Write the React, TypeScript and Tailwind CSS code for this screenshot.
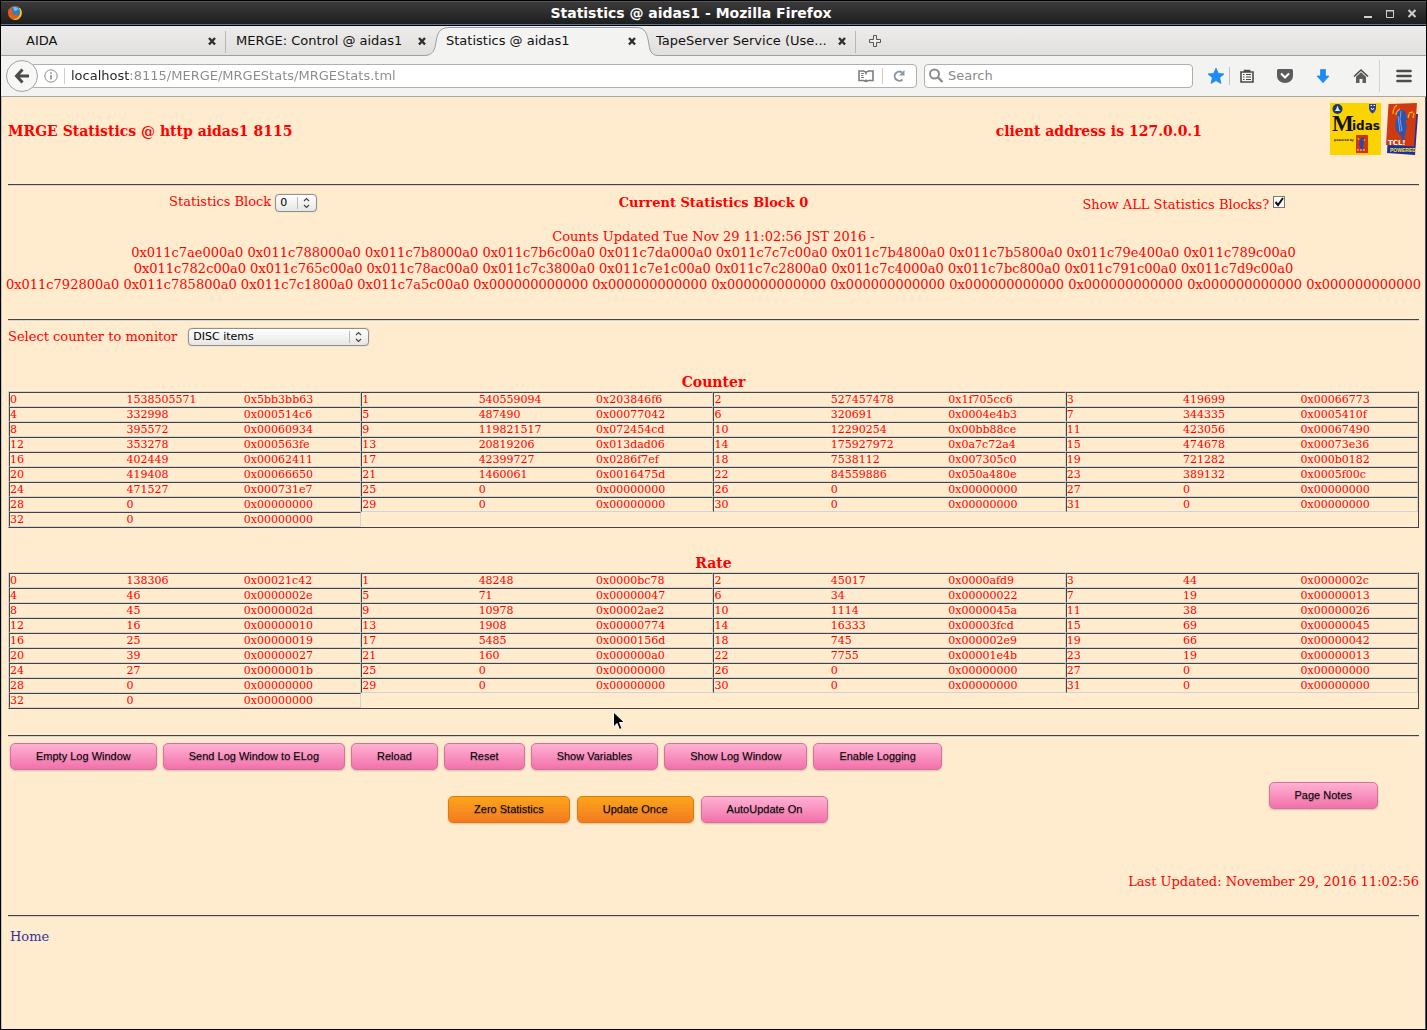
import { useState, type ReactNode } from "react";

const TABS = [
  { title: "AIDA", active: false },
  { title: "MERGE: Control @ aidas1", active: false },
  { title: "Statistics @ aidas1", active: true },
  { title: "TapeServer Service (Use...", active: false },
];

const TIMESTAMPS = [
  "0x011c7ae000a0 0x011c788000a0 0x011c7b8000a0 0x011c7b6c00a0 0x011c7da000a0 0x011c7c7c00a0 0x011c7b4800a0 0x011c7b5800a0 0x011c79e400a0 0x011c789c00a0",
  "0x011c782c00a0 0x011c765c00a0 0x011c78ac00a0 0x011c7c3800a0 0x011c7e1c00a0 0x011c7c2800a0 0x011c7c4000a0 0x011c7bc800a0 0x011c791c00a0 0x011c7d9c00a0",
  "0x011c792800a0 0x011c785800a0 0x011c7c1800a0 0x011c7a5c00a0 0x000000000000 0x000000000000 0x000000000000 0x000000000000 0x000000000000 0x000000000000 0x000000000000 0x000000000000",
];

const COUNTERS = [
  1538505571, 540559094, 527457478, 419699, 332998, 487490, 320691, 344335,
  395572, 119821517, 12290254, 423056, 353278, 20819206, 175927972, 474678,
  402449, 42399727, 7538112, 721282, 419408, 1460061, 84559886, 389132,
  471527, 0, 0, 0, 0, 0, 0, 0, 0,
];

const RATES = [
  138306, 48248, 45017, 44, 46, 71, 34, 19,
  45, 10978, 1114, 38, 16, 1908, 16333, 69,
  25, 5485, 745, 66, 39, 160, 7755, 19,
  27, 0, 0, 0, 0, 0, 0, 0, 0,
];

const LOG_BUTTONS = [
  "Empty Log Window",
  "Send Log Window to ELog",
  "Reload",
  "Reset",
  "Show Variables",
  "Show Log Window",
  "Enable Logging",
];

const toHex = (n: number) => "0x" + n.toString(16).padStart(8, "0");

function TitleBar() {
  return (
    <div className="flex h-[26px] items-center border-y border-black bg-linear-to-b from-[#3c3c3c] via-[#2d2d2d] to-[#1c1c1c] pl-[6px] pr-[5px] shadow-[inset_0_-1px_0_#5477a0,inset_0_1px_0_#555]">
      <svg className="h-4 w-4" viewBox="0 0 16 16">
        <circle cx="8" cy="8" r="7" fill="#e0661a" />
        <circle cx="8.5" cy="6.5" r="5" fill="#2b7fc4" />
        <path d="M6 2.500c2-1 5 0 6 2-2 0-2 1-3 1.500s-2-.5-3-3.500z" fill="#6cc0ea" />
        <path d="M1.500 4c0 0 .5 1 1.500 1 1.500-.5 3 .5 3.500 1.500-1 0-1.500 1-1 2 1 1.500 3.500 1.500 5 .5-1 3-5 3.500-7 1.500C1.500 9 1 6 1.500 4z" fill="#e8591c" />
        <path d="M13 3c2.500 3 2.500 8-1.500 11-2 1.200-4 1.300-6 .5 4 0 7.500-2.500 7.500-7 0-1.500-.2-3-1-4.500z" fill="#f9c22e" />
      </svg>
      <h1 className="flex-1 text-center text-sm leading-5 font-bold text-white">
        Statistics @ aidas1 - Mozilla Firefox
      </h1>
      <div className="flex gap-1 text-[#d0d0cc]">
        <button type="button" aria-label="Minimize" className="h-4 w-[18px]">
          <svg className="mx-auto h-4 w-4" viewBox="0 0 16 16" fill="none" stroke="currentColor">
            <path d="M4 12h8" strokeWidth="2" />
          </svg>
        </button>
        <button type="button" aria-label="Maximize" className="h-4 w-[18px]">
          <svg className="mx-auto h-4 w-4" viewBox="0 0 16 16" fill="none" stroke="currentColor">
            <path d="M4.500 5v7.500h7V5M4 5.500h8M4 6h8" />
          </svg>
        </button>
        <button type="button" aria-label="Close" className="h-4 w-[18px]">
          <svg className="mx-auto h-4 w-4" viewBox="0 0 16 16" fill="none" stroke="currentColor">
            <path d="M4.500 5l7 7M11.500 5l-7 7" strokeWidth="2" />
          </svg>
        </button>
      </div>
    </div>
  );
}

function TabStrip() {
  return (
    <div className="flex h-[30px] items-center border-b border-[#a0a0a0] bg-linear-to-b from-[#edecea] to-[#e1e0de] pl-[15px] text-[13px] text-[#111]">
      {TABS.map((tab, i) => (
        <div key={tab.title} className="relative flex h-full w-[210px] items-center pt-px pl-[10px] pr-2">
          {tab.active && (
            <svg
              className="absolute top-px -left-3 h-[29px] w-[235px]"
              viewBox="0 0 235 29"
              preserveAspectRatio="none"
            >
              <path
                d="M0 28.500C6 28.500 10 26 11.500 18C13 7 15 .5 25 .5H213C221 .5 223.500 7 225 18C226 26 229 28.500 235 28.500V30H0z"
                fill="#f3f3f2"
              />
              <path
                d="M0 28.500C6 28.500 10 26 11.500 18C13 7 15 .5 25 .5H213C221 .5 223.500 7 225 18C226 26 229 28.500 235 28.500"
                fill="none"
                stroke="#9a9fa6"
              />
            </svg>
          )}
          <span className="relative flex-1 truncate">{tab.title}</span>
          <button type="button" aria-label={`Close ${tab.title}`} className="relative h-3 w-3">
            <svg className="h-3 w-3" viewBox="0 0 12 12" fill="none" stroke="#2e2e2e">
              <path d="M3 3l6 6.500M9 3L3 9.500" strokeWidth="2.400" />
            </svg>
          </button>
          {(i === 0 || i === 3) && (
            <span className="absolute right-0 top-[5px] h-[22px] w-px bg-[#b8b8b6]" />
          )}
        </div>
      ))}
      <button type="button" aria-label="Open a new tab" className="ml-3 pt-px">
        <svg className="h-[14px] w-[14px]" viewBox="0 0 14 14" fill="#ececec" stroke="#555">
          <path d="M5.500 1.500h3v4h4v3h-4v4h-3v-4h-4v-3h4z" />
        </svg>
      </button>
    </div>
  );
}

function ToolButton({ label, children }: { label: string; children: ReactNode }) {
  return (
    <button type="button" aria-label={label} className="flex h-6 w-[38px] items-center justify-center">
      {children}
    </button>
  );
}

function NavBar() {
  return (
    <div className="flex h-[41px] items-center border-b border-[#a8a8a8] bg-[#f3f3f2] pl-[5px] text-[13px]">
      <button
        type="button"
        aria-label="Back"
        className="relative z-10 flex h-8 w-8 items-center justify-center rounded-full border border-[#a3a3a3] bg-[#f7f7f6]"
      >
        <svg className="h-4 w-4" viewBox="0 0 16 16" fill="none" stroke="#4b4b4b" strokeWidth="3">
          <path d="M8.500 1.500L2.500 8l6 6.500M2.500 8H15" />
        </svg>
      </button>
      <div className="-ml-2 flex h-6 flex-1 items-center rounded-sm border border-[#b0b0b0] bg-white pl-[13px]">
        <svg className="h-[14px] w-[14px]" viewBox="0 0 14 14" fill="none" stroke="#8c8c8c">
          <circle cx="7" cy="7" r="6.200" />
          <path d="M7 6v4.500M7 3.300v1.500" strokeWidth="1.600" />
        </svg>
        <span className="mx-[6px] h-4 w-px bg-[#ccc]" />
        <input
          type="text"
          aria-label="Address"
          defaultValue="localhost:8115/MERGE/MRGEStats/MRGEStats.tml"
          className="min-w-0 flex-1 bg-[linear-gradient(90deg,#222_59px,#8a8a8a_59px)] bg-clip-text text-transparent outline-none"
        />
        <button type="button" aria-label="Reader view">
          <svg className="h-4 w-4" viewBox="0 0 16 16" fill="none" stroke="#7c7c7c" strokeWidth="1.600">
            <path d="M1 3h4.500L8 4.200 10.500 3H15v9.500h-4.500L8 13.500 5.500 12.500H1zM8 4.500v2M8 11.500v2" />
            <path d="M3 5.500h3M3 7.500h2.500M3 9.500h3" strokeWidth="1" />
          </svg>
        </button>
        <span className="mx-2 h-4 w-px bg-[#ccc]" />
        <button type="button" aria-label="Reload page" className="mr-[9px]">
          <svg className="h-4 w-4" viewBox="0 0 16 16" fill="none" stroke="#8796a5" strokeWidth="2">
            <path d="M11.500 11.500A4.600 4.600 0 1 1 11 4.500" />
            <path d="M13.500 2v5.500H8z" fill="#8796a5" stroke="none" />
          </svg>
        </button>
      </div>
      <div className="ml-[7px] flex h-6 w-[269px] items-center rounded-sm border border-[#b0b0b0] bg-white pl-[3px]">
        <svg className="h-4 w-4" viewBox="0 0 16 16" fill="none" stroke="#8c8c8c" strokeWidth="2">
          <circle cx="6.500" cy="6" r="4.500" />
          <path d="M10 9.500l4.500 4.500" strokeWidth="2.400" />
        </svg>
        <input
          type="text"
          aria-label="Search"
          placeholder="Search"
          className="ml-1 min-w-0 flex-1 outline-none placeholder:text-[#8a8a8a]"
        />
      </div>
      <button type="button" aria-label="Bookmark" className="ml-[14px] flex w-[18px] justify-center">
        <svg className="h-[18px] w-[18px]" viewBox="0 0 18 18">
          <path d="M9 1l2.300 5.300 5.700.6-4.300 3.800 1.300 5.800L9 13.600l-5 2.900 1.300-5.800L1 6.900l5.700-.6z" fill="#1a8cff" stroke="#1077dd" strokeWidth=".6" />
        </svg>
      </button>
      <span className="ml-1 h-[18px] w-px bg-[#c2c2c2]" />
      <div className="-ml-[2px] flex items-center">
        <ToolButton label="Bookmarks menu">
          <svg className="h-4 w-4" viewBox="0 0 16 16" fill="none" stroke="#4b4b4b" strokeWidth="1.600">
            <path d="M2 4h12v10H2zM5.500 3.500V2.500h5v1" />
            <path d="M4 6.500h1.500M7 6.500h5M4 9h1.500M7 9h5M4 11.500h1.500M7 11.500h5" strokeWidth="1.200" />
          </svg>
        </ToolButton>
        <ToolButton label="Pocket">
          <svg className="h-4 w-4" viewBox="0 0 16 16">
            <path d="M1.500 1h13q1.500 0 1.500 1.500V8a8 7 0 0 1-16 0V2.500Q0 1 1.500 1z" fill="#5c5c5c" />
            <path d="M4 5.500l4 4 4-4" fill="none" stroke="#fff" strokeWidth="2" />
          </svg>
        </ToolButton>
        <ToolButton label="Downloads">
          <svg className="h-4 w-4" viewBox="0 0 16 16">
            <path d="M5.500 1.500h5V8h3.500L8 14.800 2 8h3.500z" fill="#1a8cff" stroke="#0f78dc" strokeWidth=".6" />
          </svg>
        </ToolButton>
        <ToolButton label="Home page">
          <svg className="h-4 w-4" viewBox="0 0 16 16">
            <path d="M1 8.500L8 2l7 6.500" fill="none" stroke="#4b4b4b" strokeWidth="1.600" />
            <path d="M3 8.800L8 4.300l5 4.500V15H9.500v-4h-3v4H3z" fill="#5c5c5c" />
          </svg>
        </ToolButton>
      </div>
      <span className="-ml-px h-8 w-px bg-[#d4d4d4]" />
      <button type="button" aria-label="Open menu" className="ml-4 mr-[14px]">
        <svg className="h-4 w-4" viewBox="0 0 16 16" stroke="#4b4b4b" strokeWidth="2.600" strokeLinecap="round">
          <path d="M1.500 3h13M1.500 8h13M1.500 13h13" />
        </svg>
      </button>
    </div>
  );
}

function MidasLogo() {
  return (
    <svg className="h-[52px] w-[51px]" viewBox="0 0 51 52">
      <rect width="51" height="52" fill="#fbd300" />
      <circle cx="7.500" cy="6" r="5" fill="#173a66" />
      <path d="M4.500 8h6L9 6.500 7.500 2.500 6 6.500z" fill="#dfe8ef" />
      <path d="M39 1h7v5q-1 3-3.500 4.500Q40 9 39 6z" fill="#2b4390" />
      <path d="M40.500 2.500h1.500M43.500 2.500H45M41 5l1.500 2L44 5" stroke="#fff" fill="none" />
      <text x="2" y="28" fill="#111" className="font-['Liberation_Serif'] text-[23px] font-bold">M</text>
      <text x="22" y="27" fill="#111" className="font-['DejaVu_Sans'] text-[12px] font-bold">idas</text>
      <text x="4" y="38" fill="#222" className="font-['DejaVu_Sans'] text-[3px] font-bold">powered by</text>
      <rect x="26" y="32" width="12" height="18" fill="#cf3513" />
      <path d="M32 34l2 1-1 11-2 1-2-6 1-4z" fill="#2a49a0" />
      <path d="M28 35l1 2M35 36l-1 2" stroke="#f6bd1c" />
      <path d="M27 47h9" stroke="#f4d9c2" strokeDasharray="2 1" />
    </svg>
  );
}

function TclLogo() {
  return (
    <svg className="h-[52px] w-[33px]" viewBox="0 0 33 52">
      <path d="M26 11h6l-3 41-28-2 2-37z" fill="#1c2f93" />
      <path d="M2.500 1L31 0l-3 43.500L0 42z" fill="#d03a10" />
      <path d="M13 7c4-1 7 1 7 5l2 4-3 2 2 5-2 8-1 10-3-8-5-6c-1-5-1-9 1-12 0-4 0-6 2-8z" fill="#2c55b0" />
      <path d="M15 8l-1 8 2 12M12 13l2 16" fill="none" stroke="#7d9fe0" />
      <path d="M7 11c0-4 1-7 4-9M10 12c0-3 1-4 4-6M27 9l-4 1M28 10l-1 5M23 11l-1 4" fill="none" stroke="#f8a818" strokeWidth="1.400" />
      <text x="2" y="42" fill="#fff" className="font-['DejaVu_Sans'] text-[7px]">TCL!</text>
      <text x="4" y="49" fill="#ffe640" className="font-['Liberation_Sans'] text-[5px] font-bold">POWERED</text>
    </svg>
  );
}

function Rule({ className }: { className: string }) {
  return <hr className={`h-[2px] border-t border-b border-t-[#444] border-b-[#d3d3d3] ${className}`} />;
}

function Picker({ id, options, width }: { id: string; options: string[]; width: string }) {
  return (
    <span className={`relative inline-flex ${width}`}>
      <select
        id={id}
        className="h-[18px] w-full appearance-none rounded border border-[#8f8f8f] bg-linear-to-b from-white to-[#e6e6e5] pl-1 font-['DejaVu_Sans',sans-serif] text-[11px] leading-[14px] text-black shadow-[0_0_1px_#999]"
      >
        {options.map((o) => (
          <option key={o}>{o}</option>
        ))}
      </select>
      <svg
        className="pointer-events-none absolute right-1 top-[2px] h-[14px] w-4"
        viewBox="0 0 16 14"
        fill="none"
        stroke="#444"
      >
        <path d="M.5 1v12" stroke="#bbb" />
        <path d="M7 5l2.500-2.500L12 5M7 9l2.500 2.500L12 9" strokeWidth="1.200" />
      </svg>
    </span>
  );
}

function StatsTable({ title, values }: { title: string; values: number[] }) {
  const rows: number[][] = [];
  for (let i = 0; i < values.length; i += 4) {
    rows.push(values.slice(i, i + 4));
  }

  return (
    <table className="mt-[26px] w-full table-fixed border-separate border-spacing-0 border border-t-[#d3d3d3] border-r-[#444] border-b-[#444] border-l-[#d3d3d3] text-[11px] leading-[13px]">
      <caption className="text-sm leading-[18px] font-bold">{title}</caption>
      <tbody>
        {rows.map((row, r) => (
          <tr key={r}>
            {row.map((value, c) => [
              <td key={`${c}-n`} className="border-t border-b border-l border-t-[#444] border-b-[#d3d3d3] border-l-[#444]">
                {r * 4 + c}
              </td>,
              <td key={`${c}-v`} className="border-t border-b border-t-[#444] border-b-[#d3d3d3]">
                {value}
              </td>,
              <td key={`${c}-h`} className="border-t border-r border-b border-t-[#444] border-r-[#d3d3d3] border-b-[#d3d3d3]">
                {toHex(value)}
              </td>,
            ])}
            {row.length < 4 && <td colSpan={(4 - row.length) * 3} />}
          </tr>
        ))}
      </tbody>
    </table>
  );
}

function ActionButton({ children, orange = false }: { children: string; orange?: boolean }) {
  return (
    <button
      type="button"
      className={`h-[27px] rounded-[5px] border px-[25px] font-['Liberation_Sans',sans-serif] text-[11px] leading-[13px] text-black shadow-[0_1px_2px_rgba(0,0,0,0.2)] text-shadow-[0_1px_1px_rgba(0,0,0,0.3)] bg-linear-to-b ${
        orange
          ? "border-[#da7c0c] from-[#faa51a] to-[#f47a20]"
          : "border-[#d2729e] from-[#feb1d3] to-[#f171ab]"
      }`}
    >
      {children}
    </button>
  );
}

export default function App() {
  const [showAll, setShowAll] = useState(true);

  return (
    <div className="flex min-h-screen flex-col border-r border-b border-l border-black bg-[#ffebcd] font-['DejaVu_Sans',sans-serif]">
      <TitleBar />
      <TabStrip />
      <NavBar />

      <main className="flex-1 border-x border-l-[#c9c2b5] border-r-[#555] px-[6px] pt-[6px] font-['DejaVu_Serif',serif] text-[13px] leading-4 text-[#ff0000]">
        <header className="grid grid-cols-[70%_1fr_auto] items-center text-sm font-bold">
          <h2 className="pt-1">MRGE Statistics @ http aidas1 8115</h2>
          <p className="pt-1">client address is 127.0.0.1</p>
          <div className="flex gap-[5px]">
            <MidasLogo />
            <TclLogo />
          </div>
        </header>

        <Rule className="mt-[29px]" />

        <div className="mt-2 grid h-[19px] grid-cols-3 text-center">
          <div className="flex justify-center gap-1">
            <label htmlFor="block">Statistics Block</label>
            <Picker id="block" options={["0", "1", "2", "3"]} width="w-[42px]" />
          </div>
          <strong className="pt-px">Current Statistics Block 0</strong>
          <div className="flex justify-center gap-1">
            <label htmlFor="show-all" className="pt-[3px]">
              Show ALL Statistics Blocks?
            </label>
            <span className="relative h-3 w-3 pt-[2px]">
              <input
                id="show-all"
                type="checkbox"
                checked={showAll}
                onChange={(e) => setShowAll(e.target.checked)}
                className="block h-3 w-3 appearance-none border border-[#777] bg-white"
              />
              {showAll && (
                <svg className="pointer-events-none absolute top-[2px] left-0 h-3 w-3" viewBox="0 0 12 12" fill="none" stroke="#111" strokeWidth="2">
                  <path d="M2.500 6l2.500 3 5-7" />
                </svg>
              )}
            </span>
          </div>
        </div>

        {/* the twelve-value line is a little wider than the content column */}
        <div className="-mx-1 mt-4 text-center whitespace-nowrap">
          <p>Counts Updated Tue Nov 29 11:02:56 JST 2016 -</p>
          {TIMESTAMPS.map((line) => (
            <p key={line}>{line}</p>
          ))}
        </div>

        <Rule className="mt-[26px]" />

        <div className="mt-[7px] flex gap-[11px]">
          <label htmlFor="counter" className="pt-px">
            Select counter to monitor
          </label>
          <Picker id="counter" options={["DISC items", "TAPE items", "LINK items"]} width="w-[181px]" />
        </div>

        <div className="mt-[27px]">
          <StatsTable title="Counter" values={COUNTERS} />
        </div>
        <StatsTable title="Rate" values={RATES} />

        <Rule className="mt-[26px]" />

        <div className="mt-[6px] ml-[2px] flex flex-wrap gap-[6px]">
          {LOG_BUTTONS.map((label) => (
            <ActionButton key={label}>{label}</ActionButton>
          ))}
        </div>
        <div className="mt-3 flex items-start">
          <div className="flex flex-1 justify-center gap-[7px] pt-[14px]">
            <ActionButton orange>Zero Statistics</ActionButton>
            <ActionButton orange>Update Once</ActionButton>
            <ActionButton>AutoUpdate On</ActionButton>
          </div>
          <div className="mr-[41px]">
            <ActionButton>Page Notes</ActionButton>
          </div>
        </div>

        <p className="mt-[51px] text-right">Last Updated: November 29, 2016 11:02:56</p>
        <Rule className="mt-[25px]" />
        <a href="#home" className="mt-3 ml-[2px] inline-block text-[#333399]">
          Home
        </a>
      </main>

      {/* mouse pointer */}
      <svg className="pointer-events-none absolute top-[711px] left-[612px] h-5 w-[14px]" viewBox="0 0 14 20">
        <path d="M1.500 1v15l3.500-3.500 2.500 6 2.500-1-2.500-6h5z" fill="#000" stroke="#fff" />
      </svg>
    </div>
  );
}
